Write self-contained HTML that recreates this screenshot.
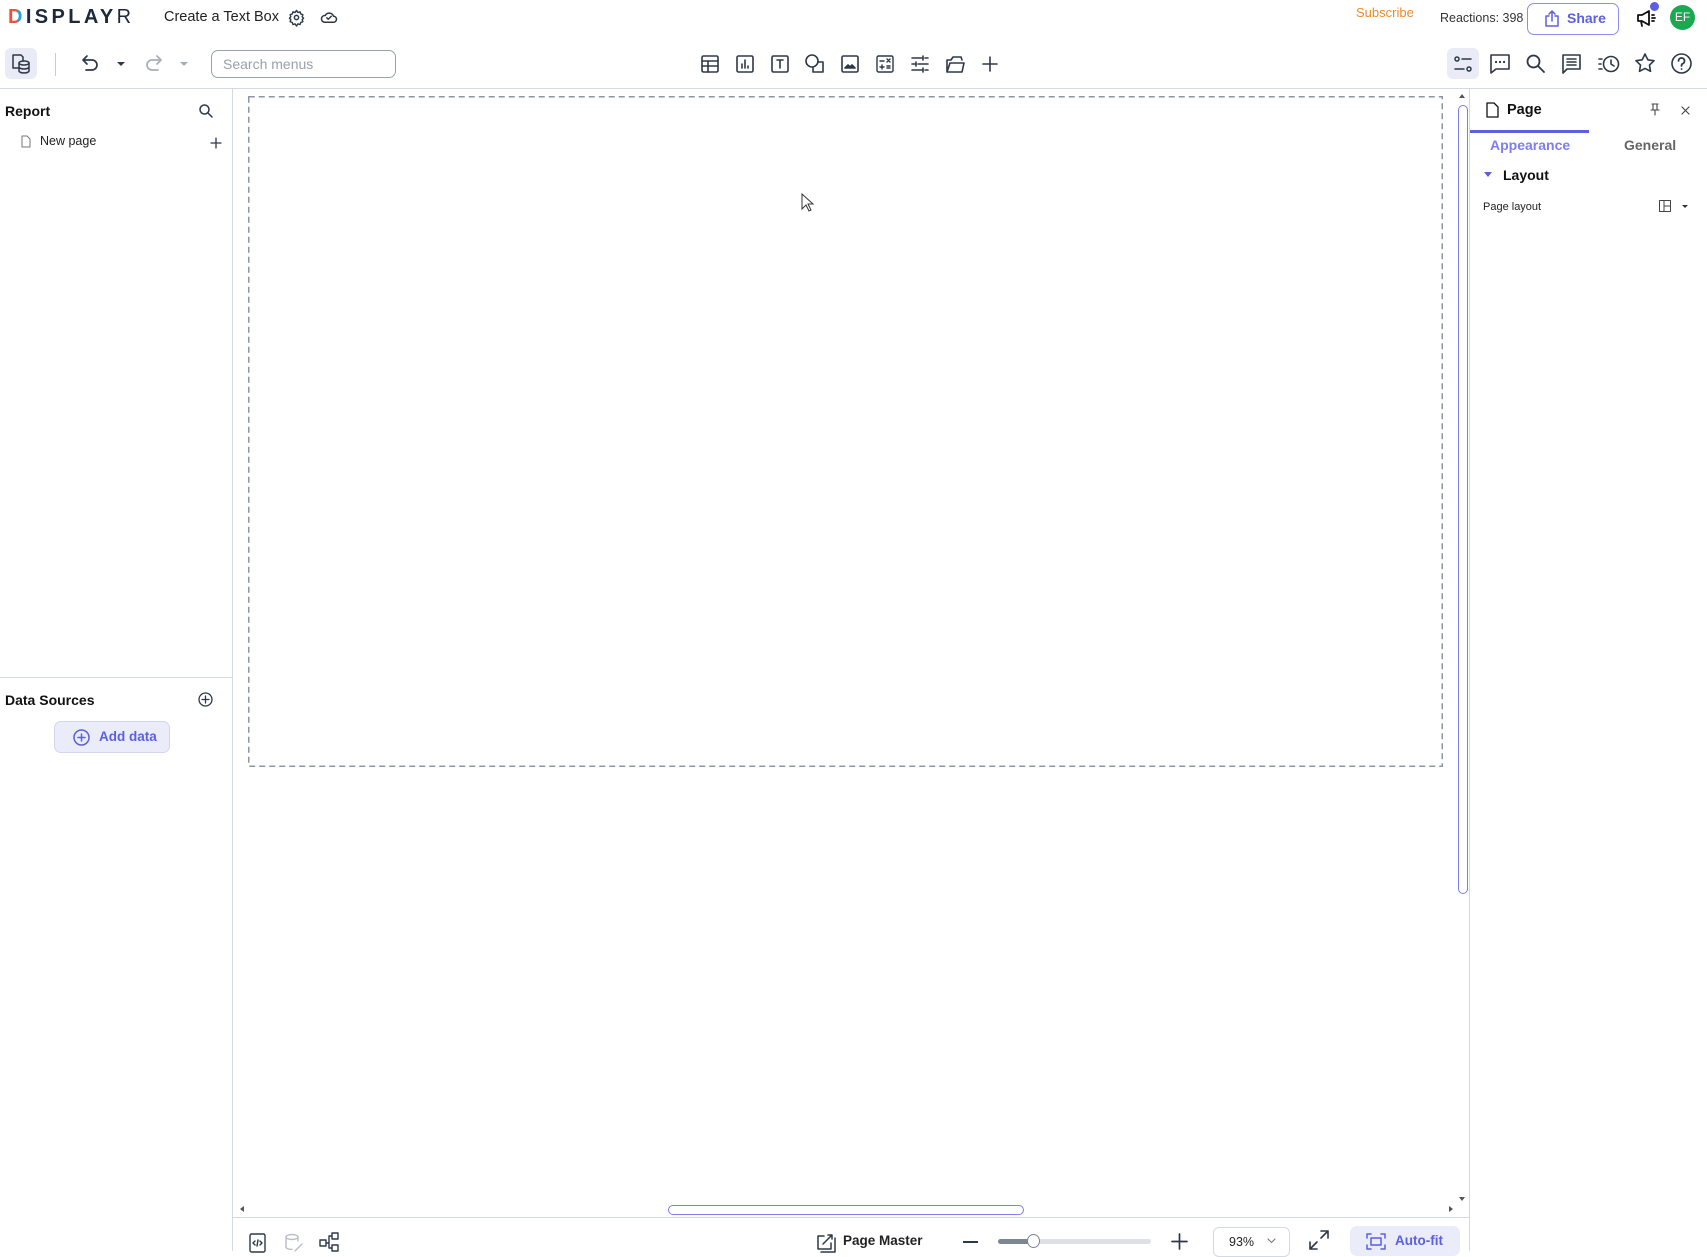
<!DOCTYPE html>
<html><head><meta charset="utf-8">
<style>
*{margin:0;padding:0;box-sizing:border-box}
body{width:1707px;height:1251px;overflow:hidden;background:#fff;font-family:"Liberation Sans",sans-serif;color:#1c2430;position:relative}
.a{position:absolute}
svg{position:absolute;overflow:visible}
.ic{fill:none;stroke:#2d3848;stroke-width:1.6;stroke-linecap:round;stroke-linejoin:round}
.t{white-space:nowrap}
</style></head><body>

<!-- top bar -->
<div class="a t" style="left:8px;top:6px;font-size:20px;letter-spacing:3.4px;color:#1d2838;font-weight:bold"><span style="background:linear-gradient(90deg,#e8523a 50%,#2a9fd8 50%);-webkit-background-clip:text;color:transparent">D</span>ISPLAY<span style="font-weight:normal">R</span></div>
<div class="a t" style="left:164px;top:9px;font-size:14.5px;color:#222">Create a Text Box</div>
<svg style="left:288px;top:9px" width="17" height="17" viewBox="0 0 24 24"><g class="ic" style="stroke-width:2"><circle cx="12" cy="12" r="3"/><path d="M12 2l2 3 3-1 1 3 3 1-1 3 2 2-2 2 1 3-3 1-1 3-3-1-2 3-2-3-3 1-1-3-3-1 1-3-2-2 2-2-1-3 3-1 1-3 3 1z"/></g></svg>
<svg style="left:320px;top:10px" width="18" height="14" viewBox="0 0 24 18"><g class="ic" style="stroke-width:2"><path d="M6 16h12a4 4 0 0 0 0-8 6 6 0 0 0-11-1 4.5 4.5 0 0 0-1 9z"/><path d="M9 10l2 2 4-4"/></g></svg>

<div class="a t" style="left:1356px;top:5px;font-size:13px;color:#f08a24">Subscribe</div>
<div class="a t" style="left:1440px;top:11px;font-size:12.5px;color:#333">Reactions: 398</div>
<div class="a" style="left:1527px;top:3px;width:92px;height:32px;border:1.5px solid #8b8ff0;border-radius:7px"></div>
<svg style="left:1545px;top:10px" width="14" height="17" viewBox="0 0 14 17"><g class="ic" style="stroke:#5b5fe0;stroke-width:1.5"><path d="M4 6H1v10h12V6h-3M7 11V1M4 4l3-3 3 3"/></g></svg>
<div class="a t" style="left:1567px;top:10px;font-size:14px;color:#5b5fe0;font-weight:bold">Share</div>
<svg style="left:1636px;top:9px" width="20" height="18" viewBox="0 0 20 18"><g class="ic" style="stroke:#111;stroke-width:1.8"><path d="M2 6h4l7-4v14l-7-4H2zM5 12l1 5M16 6h2M16 9h3M16 12h2"/></g></svg>
<div class="a" style="left:1650px;top:2px;width:9px;height:9px;border-radius:50%;background:#5b5fe0"></div>
<div class="a t" style="left:1670px;top:5px;width:25px;height:25px;border-radius:50%;background:#1aa851;color:#fff;font-size:12px;text-align:center;line-height:25px">EF</div>

<!-- toolbar -->
<div class="a" style="left:5px;top:48px;width:32px;height:31px;border-radius:6px;background:#e9ebf7"></div>
<svg style="left:11px;top:53px" width="20" height="21" viewBox="0 0 20 21"><g class="ic" style="stroke-width:1.5"><path d="M8 15H2V2h8l2 2v4"/><ellipse cx="13" cy="10" rx="5" ry="2"/><path d="M8 10v8c0 1 2.2 2 5 2s5-1 5-2v-8M8 14c0 1 2.2 2 5 2s5-1 5-2"/></g></svg>
<div class="a" style="left:55px;top:53px;width:1px;height:23px;background:#c8ccd6"></div>
<svg style="left:82px;top:55px" width="16" height="15" viewBox="0 0 16 15"><g class="ic" style="stroke-width:1.7"><path d="M5 1L1 5l4 4M1 5h9a5 5 0 0 1 0 10H4"/></g></svg>
<div class="a" style="left:117px;top:62px;border:4px solid transparent;border-top:4px solid #2d3848;border-bottom:0"></div>
<svg style="left:146px;top:55px" width="16" height="15" viewBox="0 0 16 15"><g class="ic" style="stroke:#a8aeb8;stroke-width:1.7"><path d="M11 1l4 4-4 4M15 5H6a5 5 0 0 0 0 10h6"/></g></svg>
<div class="a" style="left:180px;top:62px;border:4px solid transparent;border-top:4px solid #a8aeb8;border-bottom:0"></div>
<div class="a" style="left:211px;top:50px;width:185px;height:28px;border:1.3px solid #9aa1b0;border-radius:7px"></div>
<div class="a t" style="left:223px;top:56px;font-size:14px;color:#9aa0aa">Search menus</div>

<svg style="left:701px;top:55px" width="18" height="18" viewBox="0 0 18 18"><g class="ic"><rect x="1" y="1" width="16" height="16" rx="1.5"/><path d="M1 6h16M1 11h16M7 6v11"/></g></svg>
<svg style="left:736px;top:55px" width="18" height="18" viewBox="0 0 18 18"><g class="ic"><rect x="1" y="1" width="16" height="16" rx="1.5"/><path d="M6 13V9M9 13V5M12 13v-2"/></g></svg>
<svg style="left:771px;top:55px" width="18" height="18" viewBox="0 0 18 18"><g class="ic"><rect x="1" y="1" width="16" height="16" rx="1.5"/><path d="M6 5h6M9 5v8"/></g></svg>
<svg style="left:805px;top:54px" width="20" height="20" viewBox="0 0 20 20"><g class="ic"><circle cx="7" cy="7" r="6"/><path d="M13 8h5v10H8v-4"/></g></svg>
<svg style="left:841px;top:55px" width="18" height="18" viewBox="0 0 18 18"><g class="ic"><rect x="1" y="1" width="16" height="16" rx="1.5"/><path d="M4 13l3-3 2 2 2-2 3 3z" fill="#2d3848"/></g></svg>
<svg style="left:876px;top:55px" width="18" height="18" viewBox="0 0 18 18"><g class="ic" style="stroke-width:1.4"><rect x="1" y="1" width="16" height="16" rx="1.5"/><path d="M4 6h4M11 4l3 3M14 4l-3 3M4 12h4M6 10v4M11 11h3M11 13h3"/></g></svg>
<svg style="left:911px;top:55px" width="18" height="18" viewBox="0 0 18 18"><g class="ic"><path d="M1 3h10M14 3h3M12 1v4M1 9h3M7 9h10M5 7v4M1 15h10M14 15h3M12 13v4"/></g></svg>
<svg style="left:945px;top:55px" width="20" height="18" viewBox="0 0 20 18"><g class="ic"><path d="M2 17V5h4l2-3h8l1 3M2 17h15l2-9H5z"/></g></svg>
<svg style="left:982px;top:56px" width="16" height="16" viewBox="0 0 16 16"><g class="ic"><path d="M8 1v14M1 8h14"/></g></svg>

<div class="a" style="left:1447px;top:48px;width:32px;height:31px;border-radius:6px;background:#e9ebf7"></div>
<svg style="left:1454px;top:55px" width="18" height="18" viewBox="0 0 18 18"><g class="ic" style="stroke-width:1.5"><circle cx="3" cy="4" r="2"/><path d="M8 4h9M1 14h9"/><circle cx="15" cy="14" r="2"/></g></svg>
<svg style="left:1490px;top:54px" width="20" height="20" viewBox="0 0 20 20"><g class="ic"><path d="M1 1h18v14H6l-5 4z"/><path d="M6 8h.1M10 8h.1M14 8h.1" style="stroke-width:2.2"/></g></svg>
<svg style="left:1526px;top:54px" width="19" height="19" viewBox="0 0 19 19"><g class="ic" style="stroke-width:1.8"><circle cx="7.5" cy="7.5" r="6"/><path d="M12 12l6 6"/></g></svg>
<svg style="left:1562px;top:54px" width="19" height="20" viewBox="0 0 19 20"><g class="ic"><path d="M1 1h17v14H5l-4 4z"/><path d="M5 5h9M5 8h9M5 11h9"/></g></svg>
<svg style="left:1598px;top:54px" width="22" height="20" viewBox="0 0 22 20"><g class="ic"><circle cx="13" cy="10" r="7.5"/><path d="M13 6v4l3 2M1 5h3M1 10h2M1 15h3"/></g></svg>
<svg style="left:1635px;top:53px" width="20" height="20" viewBox="0 0 20 20"><g class="ic"><path d="M10 1l2.8 5.8 6.2.9-4.5 4.4 1 6.2L10 15.4 4.5 18.3l1-6.2L1 7.7l6.2-.9z"/></g></svg>
<svg style="left:1671px;top:53px" width="21" height="21" viewBox="0 0 21 21"><g class="ic"><circle cx="10.5" cy="10.5" r="9.5"/><path d="M7.5 8a3 3 0 1 1 4 2.8c-1 .4-1 1-1 2.2M10.5 16h.1" style="stroke-width:1.8"/></g></svg>

<div class="a" style="left:0;top:88px;width:1707px;height:1px;background:#d5d9e2"></div>

<!-- left panel -->
<div class="a" style="left:232px;top:88px;width:1px;height:1163px;background:#d5d9e2"></div>
<div class="a t" style="left:5px;top:103px;font-size:14px;font-weight:bold;color:#111">Report</div>
<svg style="left:199px;top:104px" width="14" height="14" viewBox="0 0 14 14"><g class="ic" style="stroke-width:1.5"><circle cx="5.5" cy="5.5" r="4.5"/><path d="M9 9l4 4"/></g></svg>
<svg style="left:21px;top:135px" width="10" height="13" viewBox="0 0 10 13"><g class="ic" style="stroke:#777;stroke-width:1"><path d="M1 1h5l3 3v8H1z"/></g></svg>
<div class="a t" style="left:40px;top:134px;font-size:12.5px;color:#222">New page</div>
<svg style="left:211px;top:138px" width="10" height="10" viewBox="0 0 10 10"><g class="ic" style="stroke-width:1.3"><path d="M5 0v10M0 5h10"/></g></svg>
<div class="a" style="left:0;top:677px;width:232px;height:1px;background:#d5d9e2"></div>
<div class="a t" style="left:5px;top:692px;font-size:14px;font-weight:bold;color:#111">Data Sources</div>
<svg style="left:198px;top:692px" width="15" height="15" viewBox="0 0 15 15"><g class="ic" style="stroke-width:1.3"><circle cx="7.5" cy="7.5" r="6.5"/><path d="M7.5 4v7M4 7.5h7"/></g></svg>
<div class="a" style="left:54px;top:721px;width:116px;height:32px;border-radius:7px;background:#eaecfa;border:1px solid #d2d5ef"></div>
<svg style="left:73px;top:729px" width="17" height="17" viewBox="0 0 17 17"><g class="ic" style="stroke:#5b5fe0;stroke-width:1.5"><circle cx="8.5" cy="8.5" r="7.5"/><path d="M8.5 5v7M5 8.5h7"/></g></svg>
<div class="a t" style="left:99px;top:729px;font-size:13.5px;font-weight:bold;color:#5b5fe0">Add data</div>

<!-- canvas -->
<svg style="left:248px;top:96px" width="1195" height="671" viewBox="0 0 1195 671"><rect x="0.75" y="0.75" width="1193.5" height="669.5" fill="none" stroke="#8e96a6" stroke-width="1.5" stroke-dasharray="6 4"/></svg>
<svg style="left:801px;top:193px" width="13" height="19" viewBox="0 0 13 19"><path d="M1 1v15l4-4 3 6 2-1-3-6h5z" fill="#fff" stroke="#333" stroke-width="1"/></svg>
<div class="a" style="left:1458px;top:105px;width:10px;height:789px;border:1.3px solid #7b80e8;border-radius:5px"></div>
<div class="a" style="left:1459px;top:94px;border:3px solid transparent;border-bottom:4px solid #555;border-top:0"></div>
<div class="a" style="left:1459px;top:1197px;border:3px solid transparent;border-top:4px solid #555;border-bottom:0"></div>
<div class="a" style="left:668px;top:1205px;width:356px;height:10px;border:1.3px solid #7b80e8;border-radius:5px"></div>
<div class="a" style="left:240px;top:1206px;border:3px solid transparent;border-right:4px solid #555;border-left:0"></div>
<div class="a" style="left:1449px;top:1206px;border:3px solid transparent;border-left:4px solid #555;border-right:0"></div>

<!-- right panel -->
<div class="a" style="left:1469px;top:88px;width:1px;height:1163px;background:#d5d9e2"></div>
<svg style="left:1486px;top:102px" width="13" height="16" viewBox="0 0 13 16"><g class="ic" style="stroke:#111;stroke-width:1.3"><path d="M1 1h7l4 4v10H1z"/></g></svg>
<div class="a t" style="left:1507px;top:102px;font-size:14.5px;font-weight:bold;color:#111">Page</div>
<svg style="left:1650px;top:103px" width="10" height="13" viewBox="0 0 10 13"><g class="ic" style="stroke:#444;stroke-width:1.1"><path d="M2 1h6M3 1v6h4V1M1 7h8M5 7v5"/></g></svg>
<svg style="left:1681px;top:106px" width="9" height="9" viewBox="0 0 10 10"><g class="ic" style="stroke:#444;stroke-width:1.2"><path d="M1 1l8 8M9 1l-8 8"/></g></svg>
<div class="a" style="left:1470px;top:130px;width:119px;height:2.5px;background:#5b5fe0"></div>
<div class="a t" style="left:1490px;top:137px;font-size:14px;font-weight:bold;color:#7b7ff0">Appearance</div>
<div class="a t" style="left:1624px;top:137px;font-size:14px;font-weight:bold;color:#666">General</div>
<div class="a" style="left:1484px;top:172px;border:4px solid transparent;border-top:5px solid #5b5fe0;border-bottom:0"></div>
<div class="a t" style="left:1503px;top:167px;font-size:14px;font-weight:bold;color:#111">Layout</div>
<div class="a t" style="left:1483px;top:201px;font-size:11px;color:#222">Page layout</div>
<svg style="left:1659px;top:200px" width="12" height="12" viewBox="0 0 12 12"><g class="ic" style="stroke:#444;stroke-width:1"><rect x="0.5" y="0.5" width="11" height="11"/><path d="M5 0.5v11M5 6h6.5"/></g></svg>
<div class="a" style="left:1682px;top:205px;border:3px solid transparent;border-top:3.5px solid #333;border-bottom:0"></div>

<!-- bottom bar -->
<div class="a" style="left:233px;top:1217px;width:1236px;height:1px;background:#d5d9e2"></div>
<svg style="left:249px;top:1233px" width="17" height="20" viewBox="0 0 17 20"><g class="ic" style="stroke-width:1.4"><rect x="1" y="1" width="15" height="18" rx="1.5"/><path d="M6 8l-2 2 2 2M11 8l2 2-2 2M9 7l-1 6"/></g></svg>
<svg style="left:284px;top:1233px" width="20" height="20" viewBox="0 0 20 20"><g class="ic" style="stroke:#b8bdc7;stroke-width:1.4"><ellipse cx="8" cy="4" rx="6" ry="2.5"/><path d="M2 4v10c0 1.4 2.7 2.5 6 2.5M14 4v4M11 18l7-7"/></g></svg>
<svg style="left:319px;top:1232px" width="21" height="20" viewBox="0 0 21 20"><g class="ic" style="stroke-width:1.4"><rect x="1" y="8" width="6" height="6"/><rect x="13" y="1" width="6" height="6"/><rect x="13" y="13" width="6" height="6"/><path d="M7 11h3V4h3M10 11v5h3"/></g></svg>
<svg style="left:815px;top:1232px" width="20" height="20" viewBox="0 0 20 20"><g class="ic" style="stroke-width:1.5"><path d="M9 4H3v13h13v-6M6 20h14V6M8 12l9-9M13 3h4v4"/></g></svg>
<div class="a t" style="left:843px;top:1233px;font-size:13.5px;font-weight:bold;color:#222">Page Master</div>
<div class="a" style="left:963px;top:1241px;width:15px;height:2px;background:#2d3848"></div>
<div class="a" style="left:998px;top:1239px;width:153px;height:5px;border-radius:3px;background:#dde0e6"></div>
<div class="a" style="left:998px;top:1239px;width:36px;height:5px;border-radius:3px;background:#7d8694"></div>
<div class="a" style="left:1027px;top:1234px;width:13px;height:14px;border-radius:50%;background:#fff;border:1.3px solid #7d8694"></div>
<svg style="left:1172px;top:1234px" width="15" height="15" viewBox="0 0 15 15"><g class="ic" style="stroke-width:1.7"><path d="M7.5 0v15M0 7.5h15"/></g></svg>
<div class="a" style="left:1213px;top:1227px;width:77px;height:30px;border:1px solid #d5d9e2;border-radius:6px"></div>
<div class="a t" style="left:1229px;top:1235px;font-size:12.5px;color:#222">93%</div>
<svg style="left:1267px;top:1238px" width="9" height="6" viewBox="0 0 9 6"><g class="ic" style="stroke:#777;stroke-width:1.1"><path d="M1 1l3.5 3.5L8 1"/></g></svg>
<svg style="left:1309px;top:1230px" width="20" height="20" viewBox="0 0 20 20"><g class="ic" style="stroke-width:1.6"><path d="M12 1h7v7M19 1l-7 7M8 19H1v-7M1 19l7-7"/></g></svg>
<div class="a" style="left:1350px;top:1226px;width:110px;height:30px;border-radius:7px;background:#eaecfa"></div>
<svg style="left:1366px;top:1233px" width="20" height="17" viewBox="0 0 20 17"><g class="ic" style="stroke:#5b5fe0;stroke-width:1.5"><path d="M1 5V1h4M15 1h4v4M19 12v4h-4M5 16H1v-4"/><rect x="5" y="5" width="10" height="7"/></g></svg>
<div class="a t" style="left:1395px;top:1233px;font-size:13.5px;font-weight:bold;color:#5b5fe0">Auto-fit</div>

</body></html>
